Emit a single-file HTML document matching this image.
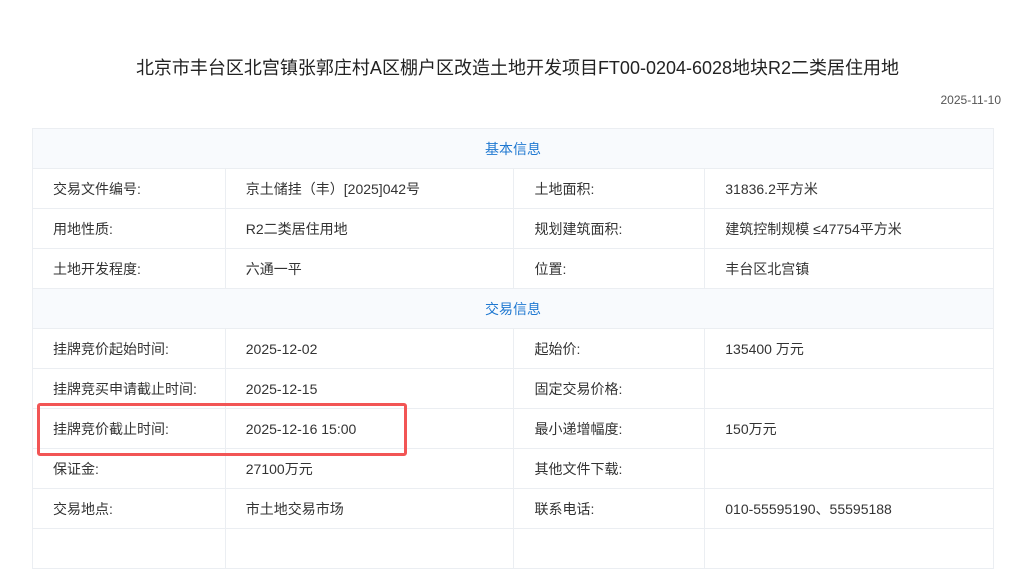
<!DOCTYPE html>
<html><head><meta charset="utf-8"><style>
body{margin:0;background:#fff;font-family:"Liberation Sans","Noto Sans CJK SC",sans-serif;color:#333;width:1031px;height:533px;overflow:hidden;position:relative}
h1{position:absolute;top:56px;left:0;width:1035px;text-align:center;margin:0;font-size:18px;font-weight:normal;color:#222;line-height:24px}
.date{position:absolute;top:93px;right:30px;font-size:12px;color:#555}
table{position:absolute;top:128px;left:32px;border-collapse:collapse;width:962px;font-size:14px}
td{border:1px solid #ebeef2;height:40px;padding:0 0 0 20px;box-sizing:border-box}
td.h{background:#f8fafd;color:#1f78d1;text-align:center;padding:0}
.box{position:absolute;left:37px;top:403px;width:364px;height:47px;border:3px solid #f25555;border-radius:3px}
</style></head><body>
<h1>北京市丰台区北宫镇张郭庄村A区棚户区改造土地开发项目FT00-0204-6028地块R2二类居住用地</h1>
<div class="date">2025-11-10</div>
<table>
<colgroup><col style="width:193px"><col style="width:289px"><col style="width:191px"><col style="width:289px"></colgroup>
<tr><td class="h" colspan="4">基本信息</td></tr>
<tr><td>交易文件编号:</td><td>京土储挂（丰）[2025]042号</td><td>土地面积:</td><td>31836.2平方米</td></tr>
<tr><td>用地性质:</td><td>R2二类居住用地</td><td>规划建筑面积:</td><td>建筑控制规模 ≤47754平方米</td></tr>
<tr><td>土地开发程度:</td><td>六通一平</td><td>位置:</td><td>丰台区北宫镇</td></tr>
<tr><td class="h" colspan="4">交易信息</td></tr>
<tr><td>挂牌竞价起始时间:</td><td>2025-12-02</td><td>起始价:</td><td>135400 万元</td></tr>
<tr><td>挂牌竞买申请截止时间:</td><td>2025-12-15</td><td>固定交易价格:</td><td></td></tr>
<tr><td>挂牌竞价截止时间:</td><td>2025-12-16 15:00</td><td>最小递增幅度:</td><td>150万元</td></tr>
<tr><td>保证金:</td><td>27100万元</td><td>其他文件下载:</td><td></td></tr>
<tr><td>交易地点:</td><td>市土地交易市场</td><td>联系电话:</td><td>010-55595190、55595188</td></tr>
<tr><td></td><td></td><td></td><td></td></tr>
</table>
<div class="box"></div>
</body></html>
